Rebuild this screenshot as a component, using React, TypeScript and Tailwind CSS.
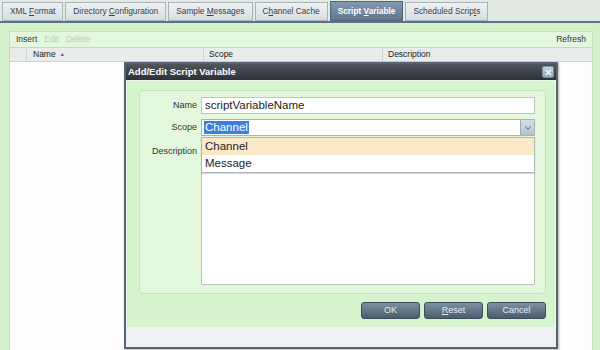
import { X, ChevronDown } from "lucide-react";

const TABS = [
  { label: "XML ", key: "F", rest: "ormat" },
  { label: "Directory ", key: "C", rest: "onfiguration" },
  { label: "Sample ", key: "M", rest: "essages" },
  { label: "C", key: "h", rest: "annel Cache" },
  { label: "Script ", key: "V", rest: "ariable", active: true },
  { label: "Scheduled Scrip", key: "t", rest: "s" },
];

function Tab({ label, k, rest, active }: { label: string; k: string; rest: string; active?: boolean }) {
  return (
    <div
      className={
        active
          ? "h-[20px] px-[7px] flex items-center border border-[#4f6579] bg-gradient-to-b from-[#8299ae] to-[#5f778d] text-white font-bold"
          : "h-[19px] px-[7px] flex items-center border border-[#a7b2ba] bg-gradient-to-b from-[#eef1f3] to-[#d6dde2] text-[#3a3f44]"
      }
    >
      <span className="whitespace-pre">
        {label}
        <span className="underline">{k}</span>
        {rest}
      </span>
    </div>
  );
}

function Btn({ children }: { children: React.ReactNode }) {
  return (
    <div className="w-[59px] h-[17px] flex items-center justify-center rounded-[3px] border border-[#3f4c5a] bg-gradient-to-b from-[#7d91a5] to-[#4b5c6e] text-[#e6ebf0] text-[9px]">
      <span>{children}</span>
    </div>
  );
}

export default function App() {
  return (
    <div className="relative w-[600px] h-[350px] overflow-hidden bg-[#d3f0cb] text-[8.5px] text-[#333]" style={{ fontFamily: '"Liberation Sans", Arial, sans-serif' }}>
      {/* tab strip */}
      <div className="h-[23px] bg-[#e3eae4] border-b-2 border-[#5e7386] flex items-end gap-[2px] pl-[2px] text-[8.3px]">
        {TABS.map((t) => (
          <Tab key={t.label} label={t.label} k={t.key} rest={t.rest} active={t.active} />
        ))}
      </div>

      {/* list panel */}
      <div className="flex flex-col h-[327px] pt-[8px] pl-[9px] pr-[7px]">
        <div className="flex-1 flex flex-col bg-[#e3f6de] border border-[#c3e0bb] border-b-0">
          <div className="h-[15px] flex items-center px-[6px] gap-[7px]">
            <span className="text-[#333]">Insert</span>
            <span className="text-[#b9ccb6]">Edit</span>
            <span className="text-[#b9ccb6]">Delete</span>
            <span className="ml-auto text-[#333]">Refresh</span>
          </div>
          <div className="h-[15px] flex bg-[#e8ecea] border-y border-[#ccd3d0] text-[#222]">
            <div className="w-[17px] border-r border-[#ccd3d0]" />
            <div className="w-[177px] border-r border-[#ccd3d0] flex items-center pl-[6px] gap-[4px]">
              <span>Name</span> <span className="text-[5px] text-[#555]">▲</span>
            </div>
            <div className="w-[179px] border-r border-[#ccd3d0] flex items-center pl-[5px]">Scope</div>
            <div className="flex-1 flex items-center pl-[5px]">Description</div>
          </div>
          <div className="flex-1 bg-[#fdfdfd]" />
        </div>
      </div>

      {/* dialog */}
      <div className="absolute left-[124px] top-[62px] w-[434px] h-[287px] border-2 border-[#566475] bg-[#eef0f3] flex flex-col shadow-[1px_1px_2px_rgba(0,0,0,0.3)]">
        <div className="h-[16px] flex items-center justify-between pl-[2px] pr-[2px] bg-gradient-to-b from-[#50565e] to-[#2d3137]">
          <span className="text-white font-bold text-[9.5px]">Add/Edit Script Variable</span>
          <div className="w-[12px] h-[12px] rounded-[2px] border border-[#7e93a6] bg-gradient-to-b from-[#c3d2de] to-[#8ea4b7] flex items-center justify-center">
            <X size={9} strokeWidth={3.5} className="text-white" />
          </div>
        </div>
        <div className="h-[248px] bg-[#d5f3cd] border border-[#eef6ec] flex flex-col pl-[12px] pr-[9px] pt-[9px]">
          <div className="h-[204px] rounded-[4px] border border-[#c3e2bb] bg-[#e2f7dc] pt-[6px] pr-[10px] flex flex-col gap-[5px] relative">
            <div className="flex items-center">
              <div className="w-[61px] text-right pr-[4px] text-[9px]">Name</div>
              <div className="flex-1 h-[17px] border border-[#b8c9b6] bg-white flex items-center pl-[3px] text-[11.5px] text-[#222]">scriptVariableName</div>
            </div>
            <div className="flex items-center">
              <div className="w-[61px] text-right pr-[4px] text-[9px]">Scope</div>
              <div className="flex-1 h-[17px] border border-[#a5b3bf] bg-white flex items-center pl-[2px] text-[11.5px]">
                <span className="bg-[#3d7fd9] text-white px-[1px] leading-[13px]">Channel</span>
                <div className="ml-auto w-[14px] h-full border-l border-[#9aa9b7] bg-gradient-to-b from-[#d5dee6] to-[#b3c1ce] flex items-center justify-center">
                  <ChevronDown size={10} strokeWidth={2.5} className="text-[#6b7884]" />
                </div>
              </div>
            </div>
            <div className="flex items-start">
              <div className="w-[61px] text-right pr-[4px] pt-[4px] text-[9px]">Description</div>
              <div className="flex-1 h-[144px] border border-[#b8c9b6] bg-white" />
            </div>
            {/* open dropdown list */}
            <div className="absolute left-[61px] right-[10px] top-[46px] border border-[#aeb6bd] bg-white text-[11.5px] text-[#222] flex flex-col shadow-[0_1px_1px_rgba(0,0,0,0.15)]">
              <div className="h-[17px] bg-[#fbe8c9] flex items-center pl-[3px]">Channel</div>
              <div className="h-[17px] flex items-center pl-[3px]">Message</div>
            </div>
          </div>
          <div className="flex justify-end gap-[4px] mt-[8px]">
            <Btn>OK</Btn>
            <Btn>
              <span className="underline">R</span>eset
            </Btn>
            <Btn>Cancel</Btn>
          </div>
        </div>
        <div className="flex-1 bg-[#eef0f3]" />
      </div>
    </div>
  );
}
